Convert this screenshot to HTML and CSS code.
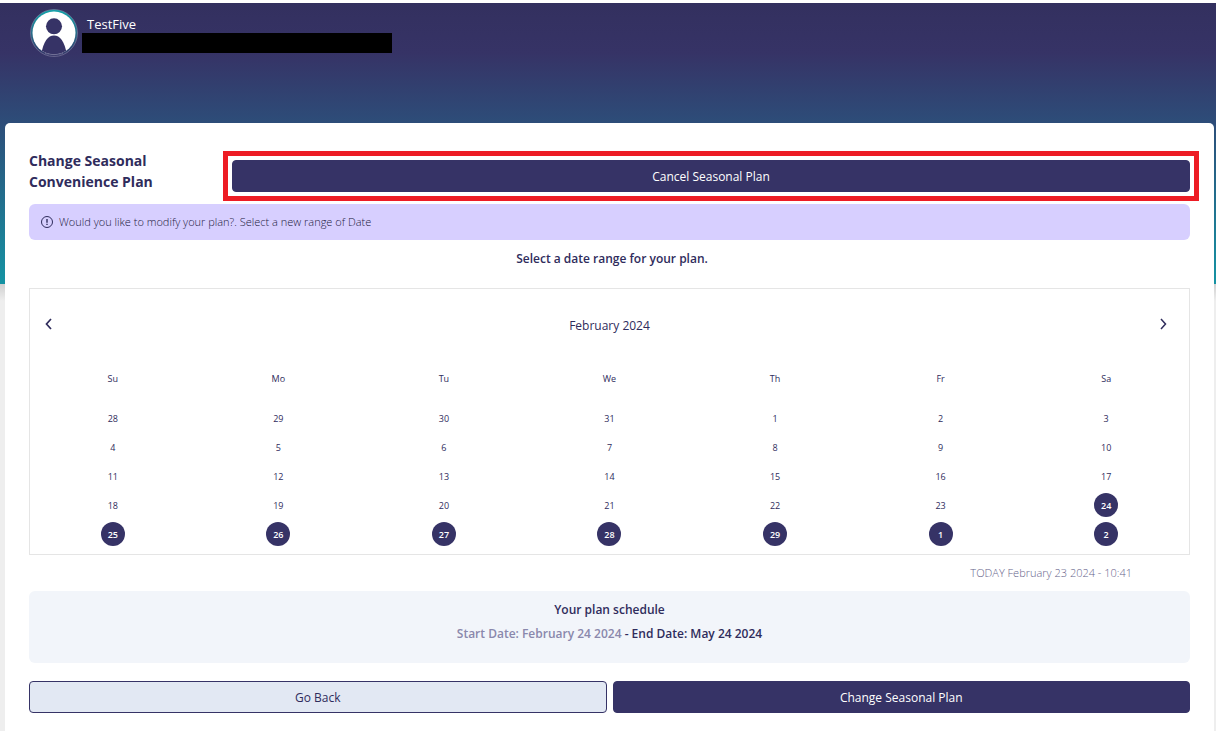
FILE: index.html
```html
<!DOCTYPE html>
<html lang="en">
<head>
<meta charset="utf-8">
<title>Change Seasonal Convenience Plan</title>
<meta name="viewport" content="width=device-width, initial-scale=1">
<link rel="stylesheet" href="styles.css">
</head>
<body>
<div class="page">
  <header class="profile">
    <svg class="avatar" viewBox="0 0 48 48" aria-hidden="true">
      <defs>
        <linearGradient id="ring" x1="0" y1="0" x2="0" y2="1">
          <stop offset="0" stop-color="#12a5ab"/>
          <stop offset="1" stop-color="#363366"/>
        </linearGradient>
        <clipPath id="face"><circle cx="24" cy="24" r="21.5"/></clipPath>
      </defs>
      <circle cx="24" cy="24" r="23.5" fill="url(#ring)" stroke="#8583a5" stroke-width="0.6"/>
      <circle cx="24" cy="24" r="21.5" fill="#fff"/>
      <g clip-path="url(#face)" fill="#363366">
        <circle cx="24" cy="17.3" r="8"/>
        <path d="M11 46C13.500 32 18 26.500 24 26.500S34.500 32 37 46Z"/>
      </g>
      <path d="M15 44.500Q24 47 33 44.500" fill="none" stroke="#77759b" stroke-width="0.7"/>
    </svg>
    <div class="profile-info">
      <span class="profile-name">TestFive</span>
      <span class="profile-detail"></span>
    </div>
  </header>

  <main class="card">
    <div class="plan-head">
      <h1 class="plan-title">Change Seasonal Convenience Plan</h1>
      <div class="highlight">
        <button type="button" class="btn btn-primary">Cancel Seasonal Plan</button>
      </div>
    </div>

    <div class="notice">
      <svg class="notice-icon" viewBox="0 0 12 12" aria-hidden="true">
        <circle cx="6" cy="6" r="5.500" fill="none" stroke="currentColor"/>
        <path d="M6 3V6.700M6 7.800V9" stroke="currentColor" stroke-width="1.400"/>
      </svg>
      <p class="notice-text">Would you like to modify your plan?. Select a new range of Date</p>
    </div>

    <h2 class="range-title">Select a date range for your plan.</h2>

    <section class="calendar" aria-label="Calendar">
      <div class="calendar-nav">
        <button type="button" class="nav-btn" aria-label="Previous month">
          <svg class="chevron" viewBox="0 0 12 12"><path d="M8 1L3.500 6L8 11" fill="none" stroke="currentColor" stroke-width="1.700"/></svg>
        </button>
        <span class="month">February 2024</span>
        <button type="button" class="nav-btn" aria-label="Next month">
          <svg class="chevron" viewBox="0 0 12 12"><path d="M4 1L8.500 6L4 11" fill="none" stroke="currentColor" stroke-width="1.500"/></svg>
        </button>
      </div>
      <table class="days">
        <thead>
          <tr><th>Su</th><th>Mo</th><th>Tu</th><th>We</th><th>Th</th><th>Fr</th><th>Sa</th></tr>
        </thead>
        <tbody>
          <tr><td><button type="button" class="day">28</button></td><td><button type="button" class="day">29</button></td><td><button type="button" class="day">30</button></td><td><button type="button" class="day">31</button></td><td><button type="button" class="day">1</button></td><td><button type="button" class="day">2</button></td><td><button type="button" class="day">3</button></td></tr>
          <tr><td><button type="button" class="day">4</button></td><td><button type="button" class="day">5</button></td><td><button type="button" class="day">6</button></td><td><button type="button" class="day">7</button></td><td><button type="button" class="day">8</button></td><td><button type="button" class="day">9</button></td><td><button type="button" class="day">10</button></td></tr>
          <tr><td><button type="button" class="day">11</button></td><td><button type="button" class="day">12</button></td><td><button type="button" class="day">13</button></td><td><button type="button" class="day">14</button></td><td><button type="button" class="day">15</button></td><td><button type="button" class="day">16</button></td><td><button type="button" class="day">17</button></td></tr>
          <tr><td><button type="button" class="day">18</button></td><td><button type="button" class="day">19</button></td><td><button type="button" class="day">20</button></td><td><button type="button" class="day">21</button></td><td><button type="button" class="day">22</button></td><td><button type="button" class="day">23</button></td><td><button type="button" class="day selected">24</button></td></tr>
          <tr><td><button type="button" class="day selected">25</button></td><td><button type="button" class="day selected">26</button></td><td><button type="button" class="day selected">27</button></td><td><button type="button" class="day selected">28</button></td><td><button type="button" class="day selected">29</button></td><td><button type="button" class="day selected">1</button></td><td><button type="button" class="day selected">2</button></td></tr>
        </tbody>
      </table>
    </section>

    <p class="today">TODAY February 23 2024 - 10:41</p>

    <section class="schedule">
      <h2 class="schedule-title">Your plan schedule</h2>
      <p class="schedule-dates"><span class="start-date">Start Date: February 24 2024</span> - End Date: May 24 2024</p>
    </section>

    <div class="actions">
      <button type="button" class="btn btn-outline">Go Back</button>
      <button type="button" class="btn btn-primary">Change Seasonal Plan</button>
    </div>
  </main>
</div>
</body>
</html>
```
FILE: styles.css
```css
:root {
  --navy: #363366;
  --text: #2f2c5c;
}

* {
  box-sizing: border-box;
}

body {
  margin: 0;
  padding-top: 3px;
  background: #fff;
  color: var(--text);
  font-family: "Open Sans", "Noto Sans", sans-serif;
  font-size: 12px;
  line-height: 20px;
}

h1, h2, p {
  margin: 0;
}

button {
  font-family: inherit;
  color: inherit;
  cursor: pointer;
}

.page {
  display: flex;
  flex-direction: column;
  min-height: calc(100vh - 3px);
  background:
    linear-gradient(#33305f 0, #363366 50px, #2d4d79 120px, #1593a3 281px, #d0d0d0 281px, #eee 298px);
}

.profile {
  display: flex;
  align-items: flex-start;
  gap: 4px;
  height: 120px;
  padding: 6px 30px;
}

.avatar {
  flex: none;
  width: 48px;
  height: 48px;
}

.profile-info {
  display: flex;
  flex-direction: column;
}

.profile-name {
  padding: 6px 0 0 5px;
  color: #fff;
  font-size: 13px;
  line-height: 18px;
}

.profile-detail {
  width: 310px;
  height: 20px;
  background: #000;
}

.card {
  flex: 1;
  margin: 0 2px 0 5px;
  padding: 27px 24px 16px;
  background: #fff;
  border-radius: 5px 5px 0 0;
}

.plan-head {
  display: grid;
  grid-template-columns: 195px 1fr;
  gap: 8px;
  align-items: end;
}

.plan-title {
  width: 150px;
  font-size: 14px;
  line-height: 21px;
  font-weight: 700;
}

.highlight {
  display: flex;
  outline: 5px solid #ed1c24;
  outline-offset: 4px;
}

.btn {
  flex: 1;
  height: 32px;
  padding: 0 12px;
  border: 1px solid var(--navy);
  border-radius: 4px;
  font-size: 12px;
}

.btn-primary {
  background: var(--navy);
  color: #fff;
}

.btn-outline {
  background: #e2e8f3;
}

.notice {
  display: flex;
  align-items: center;
  gap: 6px;
  height: 36px;
  margin-top: 12px;
  padding: 0 12px;
  border-radius: 6px;
  background: #d7cfff;
}

.notice-icon {
  width: 12px;
  height: 12px;
}

.notice-text {
  color: #1c1940;
  font-size: 11px;
  font-weight: 300;
}

.range-title {
  margin: 9px 0 19px;
  padding-left: 5px;
  font-size: 12px;
  font-weight: 600;
  text-align: center;
}

.calendar {
  padding-bottom: 5px;
  border: 1px solid #e5e5e5;
}

.calendar-nav {
  display: grid;
  grid-template-columns: 1fr auto 1fr;
  align-items: center;
  height: 70px;
  padding: 0 20px 0 13px;
}

.month {
  padding: 4px 0 0 7px;
}

.nav-btn {
  display: flex;
  padding: 0;
  border: 0;
  background: none;
}

.nav-btn:last-child {
  justify-self: end;
}

.chevron {
  width: 12px;
  height: 12px;
}

.days {
  width: 100%;
  table-layout: fixed;
  border-collapse: collapse;
  text-align: center;
}

.days th {
  height: 45px;
  padding: 0 0 5px;
  font-size: 9px;
  font-weight: 400;
}

.days td {
  height: 29px;
  padding: 2px 0 3px;
}

.day {
  display: block;
  width: 24px;
  height: 24px;
  margin: 0 auto;
  padding: 0;
  border: 0;
  border-radius: 50%;
  background: none;
  font-size: 9px;
}

.selected {
  background: var(--navy);
  color: #fff;
  font-weight: 600;
}

.today {
  margin: 8px 58px 8px 0;
  color: #66638a;
  font-size: 11px;
  font-weight: 300;
  text-align: right;
}

.schedule {
  padding: 7px 12px 17px;
  border-radius: 6px;
  background: #f2f5fa;
  text-align: center;
}

.schedule-title,
.schedule-dates {
  font-size: 12px;
  line-height: 24px;
  font-weight: 600;
}

.start-date {
  color: #8a88ac;
}

.actions {
  display: flex;
  gap: 6px;
  margin-top: 18px;
}
```
